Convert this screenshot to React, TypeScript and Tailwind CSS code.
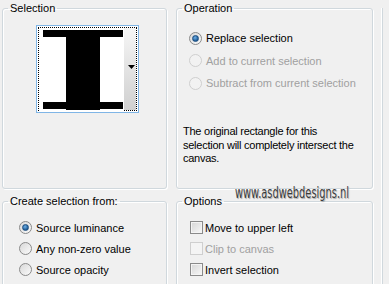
import React from "react";

const font = { fontFamily: '"Liberation Sans", Arial, sans-serif' };

function Radio({ checked, disabled, label, h = "h-[21px]" }: { checked?: boolean; disabled?: boolean; label: string; h?: string }) {
  return (
    <div className={"flex items-center " + h}>
      <span
        className={
          "relative w-[13px] h-[13px] rounded-full border flex items-center justify-center " +
          (disabled
            ? "border-[#cfcfcf] bg-[#f2f2f2]"
            : "border-[#8a8a8a] bg-gradient-to-br from-[#d8d8d8] to-[#fbfbfb]")
        }
      >
        {checked && (
          <span className="w-[7px] h-[7px] rounded-full bg-[radial-gradient(circle_at_40%_35%,#6fb0e8,#1d5a94_70%)] border border-[#1c4e80]" />
        )}
      </span>
      <span className={"ml-[4px] text-[11px] leading-[14px] " + (disabled ? "text-[#a0a0a0]" : "text-black")}>
        {label}
      </span>
    </div>
  );
}

function Check({ disabled, label }: { disabled?: boolean; label: string }) {
  return (
    <div className="flex items-center h-[21px]">
      <span
        className={
          "w-[13px] h-[13px] border " +
          (disabled
            ? "border-[#cfcfcf] bg-[#f4f4f4]"
            : "border-[#8a8a8a] bg-gradient-to-br from-[#d6d6d6] to-[#f8f8f8] shadow-[inset_0_0_0_1px_#f4f4f4]")
        }
      />
      <span className={"ml-[2px] text-[11px] leading-[14px] " + (disabled ? "text-[#a0a0a0]" : "text-black")}>
        {label}
      </span>
    </div>
  );
}

function Group({
  title,
  className,
  children,
}: {
  title: string;
  className: string;
  children?: React.ReactNode;
}) {
  return (
    <fieldset
      className={
        "border border-[#d0d8dd] rounded-[3px] shadow-[inset_1px_1px_0_#ffffff,1px_1px_0_#ffffff] " + className
      }
    >
      <legend className="ml-[5px] px-[2px] text-[11px] leading-[14px] text-black">{title}</legend>
      {children}
    </fieldset>
  );
}

export default function App() {
  return (
    <div className="relative w-[389px] h-[284px] overflow-hidden bg-[#f0f0f0]" style={font}>
      <div className="flex pl-[2px] pt-[1px] gap-[9px]">
        <div className="flex flex-col w-[165px] shrink-0 gap-[5px]">
          <Group title="Selection" className="h-[188px]">
            <div className="ml-[33px] mt-[10px] w-[103px] h-[88px] border border-[#7fb5e6] bg-white p-[1px]">
              <div className="w-full h-full border border-dotted border-black flex">
                <div className="flex-1 relative">
                  <svg width="85" height="84" viewBox="0 0 85 84" className="block">
                    <rect x="0" y="0" width="85" height="84" fill="#fff" />
                    <rect x="4" y="2" width="80" height="7" fill="#000" />
                    <rect x="27" y="2" width="34" height="80" fill="#000" />
                    <rect x="4" y="74" width="80" height="7" fill="#000" />
                  </svg>
                </div>
                <div className="w-[14px] h-full bg-gradient-to-b from-[#f6f6f6] to-[#d0d0d0] flex items-center justify-center">
                  <svg width="7" height="4" viewBox="0 0 7 4" className="ml-[2px] mt-[-4px]">
                    <path d="M0 0 H7 L3.5 4 Z" fill="#000" />
                  </svg>
                </div>
              </div>
            </div>
          </Group>
          <Group title="Create selection from:" className="h-[120px]">
            <div className="pl-[16px] pt-[9px] flex flex-col">
              <Radio checked label="Source luminance" />
              <Radio label="Any non-zero value" />
              <Radio label="Source opacity" />
            </div>
          </Group>
        </div>
        <div className="flex flex-col w-[197px] shrink-0 gap-[5px]">
          <Group title="Operation" className="h-[188px]">
            <div className="pl-[12px] pt-[12px] flex flex-col gap-[0.5px]">
              <Radio h="h-[22px]" checked label="Replace selection" />
              <Radio h="h-[22px]" disabled label="Add to current selection" />
              <Radio h="h-[22px]" disabled label="Subtract from current selection" />
            </div>
            <p className="ml-[6px] mt-[31px] w-[188px] whitespace-nowrap text-[11px] leading-[13.5px] tracking-[-0.25px] text-black">
              The original rectangle for this
              <br />
              selection will completely intersect the
              <br />
              canvas.
            </p>
          </Group>
          <Group title="Options" className="h-[120px]">
            <div className="pl-[13px] pt-[9px] flex flex-col">
              <Check label="Move to upper left" />
              <Check disabled label="Clip to canvas" />
              <Check label="Invert selection" />
            </div>
          </Group>
        </div>
        <div className="w-[30px] shrink-0 mt-[7px] h-[300px] border-l border-[#d0d8dd] shadow-[-1px_0_0_#ffffff]" />
      </div>
      <div
        className="absolute left-[235px] top-[185px] origin-left scale-x-[0.73] whitespace-nowrap text-[15px] leading-[16px] text-[#3a3a3a] [text-shadow:0_0_2px_#ffffff,1px_1px_1px_#9a9a9a]"
        style={{ fontFamily: '"DejaVu Sans Condensed", "DejaVu Sans", sans-serif' }}
      >
        www.asdwebdesigns.nl
      </div>
    </div>
  );
}
